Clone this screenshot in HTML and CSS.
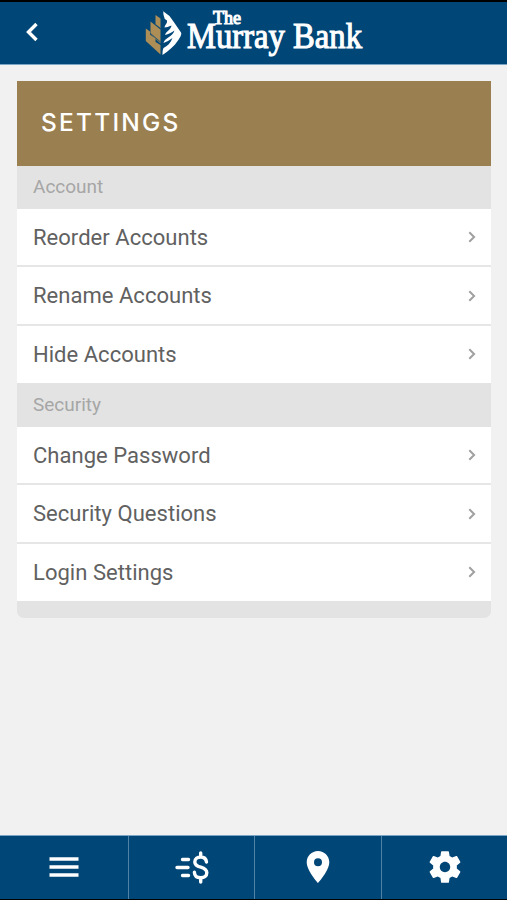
FILE: index.html
```
<!DOCTYPE html>
<html lang="en">
<head>
    <meta charset="UTF-8">
    <meta name="viewport" content="width=device-width, initial-scale=1.0">
    <title>Settings - The Murray Bank</title>
    <link rel="stylesheet" href="styles.css">
</head>
<body>
    <header class="header">
        <a class="back" href="#" aria-label="Back">
            <svg width="14" height="20" viewBox="0 0 14 20"><path d="M11.500 2 3.500 10l8 8"/></svg>
        </a>
        <svg class="logo" width="220" height="54" viewBox="0 0 220 54">
            <!-- gold bars -->
            <g class="logo-gold">
                <path d="M.8 19.500 5 22.500v3l5.500 4V33l5 3v9.500L.8 32z"/>
                <path d="M5.500 12.500 15.500 20.500v14L5.500 25z"/>
                <path d="M10.500 6 15.500 9.500v10L10.500 15.500z"/>
            </g>
            <path class="logo-gap" d="M5.500 24.500l10 8.500M10.500 15.500l5 4"/>
            <!-- white leaf -->
            <path class="logo-white" d="M17.500 1.800 24.500 7 29.500 14l6.500 9.500c1 2-1 5-3 8-4 6-9 10-15.500 14.500 0-3 0-5 1-7 4-2 7-5 9-10-3 2-6 4-9 5 1-5 9-6 11-12.500-3 2-6 3.500-9.500 4.500 1-4 6-5 6.500-9.500-3 1-5 2-7 2 .5-3 3-4 2.500-7-1.500-1-2.500-1.500-2.500-2.500-1-3-1.500-4.500-1-7z"/>
            <text x="68" y="15" font-size="18" textLength="28" lengthAdjust="spacingAndGlyphs">The</text>
            <text x="42" y="39" font-size="36" textLength="175" lengthAdjust="spacingAndGlyphs">Murray Bank</text>
        </svg>
    </header>

    <main class="content">
        <section class="card">
            <h1>SETTINGS</h1>
            <h2>Account</h2>
            <ul>
                <li><a href="#">Reorder Accounts <svg class="chevron" viewBox="0 0 8 12"><path d="m1.300 1.200 4.800 4.800-4.800 4.800"/></svg></a></li>
                <li><a href="#">Rename Accounts <svg class="chevron" viewBox="0 0 8 12"><path d="m1.300 1.200 4.800 4.800-4.800 4.800"/></svg></a></li>
                <li><a href="#">Hide Accounts <svg class="chevron" viewBox="0 0 8 12"><path d="m1.300 1.200 4.800 4.800-4.800 4.800"/></svg></a></li>
            </ul>
            <h2 class="security">Security</h2>
            <ul>
                <li><a href="#">Change Password <svg class="chevron" viewBox="0 0 8 12"><path d="m1.300 1.200 4.800 4.800-4.800 4.800"/></svg></a></li>
                <li><a href="#">Security Questions <svg class="chevron" viewBox="0 0 8 12"><path d="m1.300 1.200 4.800 4.800-4.800 4.800"/></svg></a></li>
                <li><a href="#">Login Settings <svg class="chevron" viewBox="0 0 8 12"><path d="m1.300 1.200 4.800 4.800-4.800 4.800"/></svg></a></li>
            </ul>
            <div class="card-end"></div>
        </section>
    </main>

    <nav class="tabs">
        <a href="#" aria-label="Menu">
            <svg width="30" height="22" viewBox="0 0 30 22"><path class="line" d="M.5 3h29M.5 11h29M.5 19h29"/></svg>
        </a>
        <a href="#" aria-label="Payments">
            <svg width="36" height="34" viewBox="0 0 36 34">
                <path class="line" d="M8.500 9.500h6M3 17.500h11M8.500 25.500h6" stroke-linecap="round"/>
                <path class="line" d="M32.500 12C32 8.500 29.500 7 26.700 7c-3.500 0-5.900 1.800-5.900 4.900 0 3.200 2.500 4.300 6 5.300 3.700 1.100 6 2.400 6 5.600s-2.500 5-6 5c-3.800 0-6.300-2-6.400-5.500M26.700 3v4M26.700 27.800V32" stroke-linecap="round"/>
            </svg>
        </a>
        <a href="#" aria-label="Locations">
            <svg width="24" height="32" viewBox="0 0 24 32"><path fill-rule="evenodd" d="M12 0C5.700 0 .7 5 .7 11.200.7 19.500 12 32 12 32s11.300-12.500 11.300-20.800C23.300 5 18.300 0 12 0zm0 15.200a4 4 0 1 1 0-8 4 4 0 0 1 0 8z"/></svg>
        </a>
        <a href="#" aria-label="Settings">
            <svg width="38" height="38" viewBox="0 0 24 24"><path d="M19.430 12.980c.04-.32.070-.64.070-.98s-.03-.66-.07-.98l2.110-1.650c.19-.15.240-.42.120-.64l-2-3.460c-.12-.22-.39-.3-.61-.22l-2.490 1c-.52-.4-1.080-.73-1.690-.98l-.38-2.650C14.460 2.180 14.250 2 14 2h-4c-.25 0-.46.180-.49.420l-.38 2.650c-.61.250-1.170.59-1.690.98l-2.490-1c-.23-.09-.49 0-.61.220l-2 3.460c-.13.220-.07.490.12.640l2.110 1.650c-.04.320-.07.650-.07.980s.03.660.07.980l-2.110 1.650c-.19.150-.24.420-.12.640l2 3.460c.12.220.39.300.61.220l2.490-1c.52.400 1.080.730 1.690.980l.38 2.650c.03.240.24.420.49.420h4c.25 0 .46-.18.490-.42l.38-2.650c.61-.25 1.170-.59 1.690-.98l2.490 1c.23.090.49 0 .61-.22l2-3.460c.12-.22.070-.49-.12-.64l-2.110-1.650zM12 15.300c-1.820 0-3.300-1.480-3.300-3.300s1.480-3.300 3.300-3.300 3.300 1.480 3.300 3.300-1.480 3.300-3.300 3.300z"/></svg>
        </a>
    </nav>
</body>
</html>
```
FILE: styles.css
```
* {
    box-sizing: border-box;
}
body {
    margin: 0;
    height: 100vh;
    display: flex;
    flex-direction: column;
    background: #f1f1f1;
    color: #616161;
    font-family: Roboto, sans-serif;
}
a {
    color: inherit;
    text-decoration: none;
}
.header {
    height: 65px;
    display: grid;
    grid-template-columns: 145px 1fr;
    background: #004677;
    border-top: 2px solid #000;
    border-bottom: 1px solid #7ba5c3;
}
.back {
    padding: 20px 0 0 25px;
}
.back path {
    fill: none;
    stroke: #fff;
    stroke-width: 3.4;
}
.logo {
    margin-top: 7px;
    fill: #fff;
    font-family: "Liberation Serif", serif;
    overflow: visible;
}
.logo text {
    stroke: #fff;
    stroke-width: 1.1;
}
.logo-gold {
    fill: #ad8e56;
}
.logo-gap {
    fill: none;
    stroke: #004677;
    stroke-width: 0.8;
}
.content {
    flex: 1;
    padding: 16px 16px 0 17px;
}
.card {
    border-radius: 0 0 7px 7px;
    overflow: hidden;
    background: #e3e3e3;
}
.card h1 {
    height: 85px;
    margin: 0;
    padding-left: 24px;
    background: #9a8051;
    color: #fff;
    font: 500 24.5px/83px Inter, sans-serif;
    letter-spacing: 2.2px;
}
.card h2 {
    margin: 0;
    padding-left: 16px;
    color: #a6a6a6;
    font-size: 19px;
    font-weight: 400;
    line-height: 42.5px;
}
.card h2.security {
    line-height: 44px;
}
.card ul {
    margin: 0;
    padding: 0;
    list-style: none;
    background: #fff;
}
.card li {
    height: 58.5px;
    border-bottom: 2px solid #e6e6e6;
}
.card li:last-child {
    height: 57px;
    border-bottom: 0;
}
.card li a {
    height: 57px;
    padding: 0 15px 0 16px;
    display: flex;
    align-items: center;
    justify-content: space-between;
    font-size: 22px;
    letter-spacing: 0.03px;
}
.chevron {
    width: 8px;
    height: 12px;
    fill: none;
    stroke: #a0a0a0;
    stroke-width: 2;
}
.card-end {
    height: 17px;
}
.tabs {
    height: 65px;
    display: grid;
    grid-template-columns: 129px 126px 127px 1fr;
    background: #004677;
    border-top: 1px solid #7ba5c3;
    border-bottom: 1px solid #000;
}
.tabs a {
    display: flex;
    align-items: center;
    justify-content: center;
    padding-bottom: 2px;
    border-right: 1px solid #4f82a6;
}
.tabs a:last-child {
    border-right: 0;
}
.tabs svg {
    fill: #fff;
}
.tabs .line {
    fill: none;
    stroke: #fff;
    stroke-width: 3.4;
}
```
